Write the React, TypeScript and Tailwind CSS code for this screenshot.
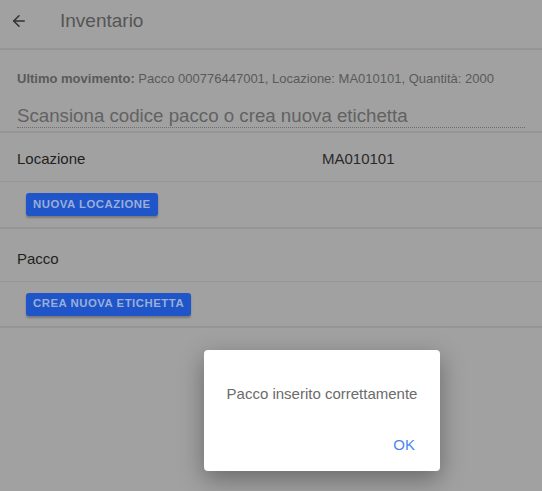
import { ArrowLeft } from "lucide-react";

function Row({ label, value, tall }: { label: string; value?: string; tall?: boolean }) {
  return (
    <div
      className={`flex items-center border-b border-[#979797] px-[17px] text-[15px] text-[#1f1f1f] ${
        tall ? "h-[53px] pt-[8px]" : "h-[49px] pt-[4px]"
      }`}
    >
      <span className="w-[305px]">{label}</span>
      {value && <span className="text-[#2a2a2a]">{value}</span>}
    </div>
  );
}

function BlueButton({ children }: { children: string }) {
  return (
    <button className="h-[23px] rounded-[3px] bg-[#1f55c8] px-[7px] text-[11.4px] font-bold uppercase tracking-[0.5px] text-[#9aaed8] shadow-[0_2px_2px_rgba(0,0,0,0.25)]">
      {children}
    </button>
  );
}

export default function App() {
  return (
    <div
      className="relative h-[491px] w-[542px] overflow-hidden bg-[#a1a1a1]"
      style={{ fontFamily: '"Liberation Sans", Arial, sans-serif' }}
    >
      <header className="flex h-[50px] items-center border-b-2 border-[#959595] px-[10px] pb-[6px]">
        <ArrowLeft size={18} strokeWidth={2} className="text-[#303030]" />
        <span className="ml-[32px] text-[19px] text-[#555555]">Inventario</span>
      </header>

      <section className="border-b-2 border-[#959595] px-[17px] pt-[20px] pb-[3px]">
        <p className="text-[13px] leading-[17px] text-[#5a5a5a]">
          <span className="font-bold">Ultimo movimento:</span> Pacco 000776447001, Locazione: MA010101, Quantità: 2000
        </p>
        <div className="mt-[18px] border-b border-dotted border-[#6e6e6e] text-[18.7px] leading-[22px] text-[#626262]">
          Scansiona codice pacco o crea nuova etichetta
        </div>
      </section>

      <section className="border-b-2 border-[#959595]">
        <Row label="Locazione" value="MA010101" />
        <div className="flex h-[45px] items-center px-[26px]">
          <BlueButton>Nuova locazione</BlueButton>
        </div>
      </section>

      <section className="border-b-2 border-[#959595]">
        <Row label="Pacco" tall />
        <div className="flex h-[44px] items-center px-[26px]">
          <BlueButton>Crea nuova etichetta</BlueButton>
        </div>
      </section>

      <div className="absolute left-[204px] top-[350px] flex h-[121px] w-[236px] flex-col rounded-[4px] bg-white shadow-[0_8px_24px_rgba(0,0,0,0.35)]">
        <p className="mt-[33px] text-center text-[15px] text-[#6b6b6b]">Pacco inserito correttamente</p>
        <div className="mt-auto mb-[15px] flex justify-end pr-[25px]">
          <button className="text-[15px] text-[#4a88f0]">OK</button>
        </div>
      </div>
    </div>
  );
}
